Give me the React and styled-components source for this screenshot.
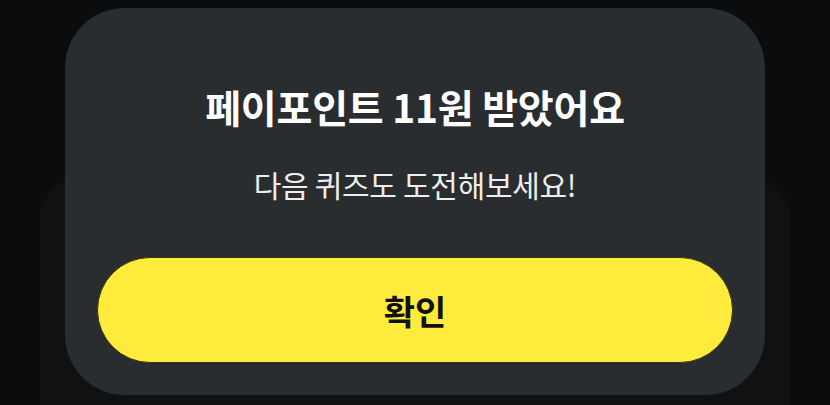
import React from 'react';
import styled, { createGlobalStyle } from 'styled-components';

const GlobalStyle = createGlobalStyle`
    html, body {
        margin: 0;
        padding: 0;
        background: #0b0c0e;
    }
    body {
        font-family: "Noto Sans CJK KR", "Noto Sans", sans-serif;
    }
`;

const Screen = styled.div`
    position: relative;
    width: 830px;
    height: 405px;
    overflow: hidden;
    background: #0b0c0e;
    padding-top: 178px;
    box-sizing: border-box;
`;

const BackSheet = styled.div`
    margin: 0 40px;
    height: 100%;
    background: #101113;
    border-radius: 40px 40px 0 0;
`;

const Modal = styled.div`
    position: absolute;
    top: 8px;
    left: 65px;
    width: 700px;
    height: 387px;
    box-sizing: border-box;
    padding: 72px 32px 0;
    background: #2a2d30;
    border-radius: 60px;
    display: flex;
    flex-direction: column;
    align-items: center;
`;

const Title = styled.h1`
    margin: 0;
    font-size: 39px;
    line-height: 52px;
    font-weight: 700;
    color: #ffffff;
    letter-spacing: -0.2px;
`;

const Subtitle = styled.p`
    margin: 32px 0 0;
    font-size: 30px;
    line-height: 40px;
    font-weight: 400;
    color: #eeeeee;
    letter-spacing: -0.3px;
`;

const ConfirmButton = styled.button`
    margin-top: 53px;
    width: 100%;
    height: 106px;
    flex-shrink: 0;
    border: 1px solid #3b3410;
    border-radius: 53px;
    background: #ffeb3b;
    color: #111111;
    font-family: inherit;
    font-size: 34px;
    font-weight: 700;
    cursor: pointer;
`;

export default function App() {
    return (
        <>
            <GlobalStyle />
            <Screen>
                <BackSheet />
                <Modal>
                    <Title>페이포인트 11원 받았어요</Title>
                    <Subtitle>다음 퀴즈도 도전해보세요!</Subtitle>
                    <ConfirmButton>확인</ConfirmButton>
                </Modal>
            </Screen>
        </>
    );
}
